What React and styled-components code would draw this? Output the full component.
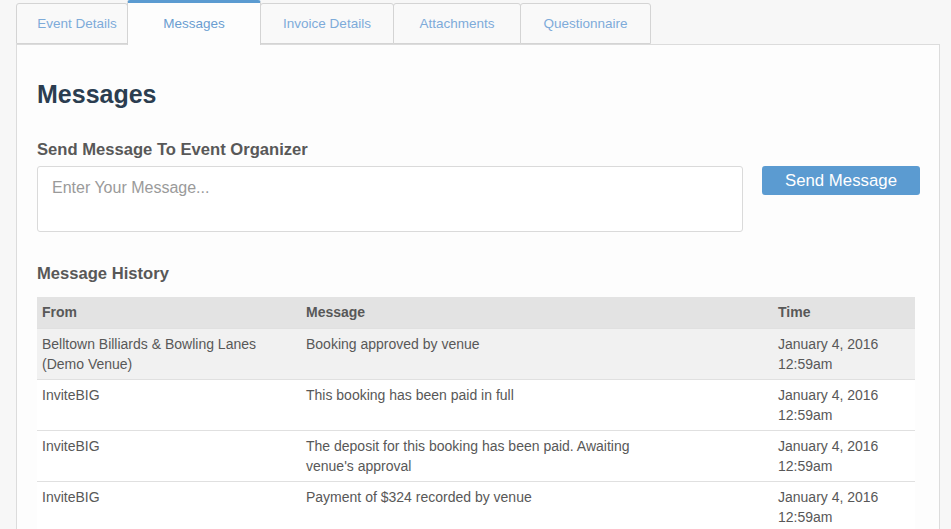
import React from "react";
import styled, { createGlobalStyle } from "styled-components";

const GlobalStyle = createGlobalStyle`
  body {
    margin: 0;
    background: #f7f7f7;
    font-family: "Liberation Sans", Arial, sans-serif;
  }
`;

const Page = styled.div`
  padding: 0 11px 0 16px;
`;

const TabBar = styled.div`
  display: flex;
  align-items: flex-end;
  height: 44px;
`;

const Tab = styled.div`
  box-sizing: border-box;
  width: ${(p) => p.width}px;
  height: ${(p) => (p.active ? 45 : 41)}px;
  margin-bottom: ${(p) => (p.active ? -1 : 0)}px;
  display: flex;
  align-items: center;
  justify-content: center;
  padding-left: ${(p) => p.shift || 0}px;
  padding-bottom: ${(p) => (p.active ? 2 : 0)}px;
  font-size: 13.5px;
  color: ${(p) => (p.active ? "#6b9dd1" : "#7eabd9")};
  background: ${(p) => (p.active ? "#fdfdfd" : "#f9f9f9")};
  border: 1px solid #d4d4d4;
  border-top: ${(p) => (p.active ? "3px solid #5b9bd1" : "1px solid #d4d4d4")};
  border-bottom: ${(p) => (p.active ? "none" : "1px solid #d4d4d4")};
  border-radius: 3px 3px 0 0;
  margin-right: -1px;
  position: relative;
  z-index: ${(p) => (p.active ? 2 : 1)};
`;

const Panel = styled.div`
  background: #fdfdfd;
  border: 1px solid #dcdcdc;
  padding: 34px 19px 0 20px;
  min-height: 500px;
`;

const Heading = styled.h1`
  margin: 0;
  font-size: 25px;
  line-height: 30px;
  font-weight: bold;
  color: #2b3d50;
`;

const SubHeading = styled.h2`
  margin: ${(p) => p.top}px 0 0;
  font-size: 16.6px;
  line-height: 20px;
  font-weight: bold;
  color: #585858;
`;

const ComposeRow = styled.div`
  display: flex;
  align-items: flex-start;
  gap: 19px;
  margin-top: 6px;
`;

const MessageInput = styled.textarea`
  box-sizing: border-box;
  width: 706px;
  height: 66px;
  border: 1px solid #dadada;
  border-radius: 3px;
  background: #fff;
  padding: 12px 14px;
  font-family: "Liberation Sans", Arial, sans-serif;
  font-size: 16px;
  resize: none;
  outline: none;
  &::placeholder {
    color: #9a9a9a;
  }
`;

const SendButton = styled.button`
  width: 158px;
  height: 29px;
  border: none;
  border-radius: 3px;
  background: #5b9bd1;
  color: #fff;
  font-family: "Liberation Sans", Arial, sans-serif;
  font-size: 16.8px;
  padding: 1px 0 0;
`;

const Table = styled.table`
  margin-top: 13px;
  width: 878px;
  border-collapse: collapse;
  font-size: 14px;
  color: #585858;
`;

const HeadCell = styled.th`
  background: #e3e3e3;
  text-align: left;
  font-weight: bold;
  height: 31px;
  padding: 0 5px;
  width: ${(p) => p.w}px;
  box-sizing: border-box;
`;

const Row = styled.tr`
  background: ${(p) => (p.shade ? "#f1f1f1" : "#fff")};
  border-top: 1px solid #e0e0e0;
`;

const Cell = styled.td`
  vertical-align: top;
  line-height: 20px;
  padding: 5px 5px 5px;
  height: 40px;
`;

const MessageText = styled.span`
  display: block;
  max-width: 345px;
`;

const tabs = [
  { label: "Event Details", width: 112, shift: 10 },
  { label: "Messages", width: 134, active: true },
  { label: "Invoice Details", width: 134 },
  { label: "Attachments", width: 128 },
  { label: "Questionnaire", width: 131 },
];

const history = [
  {
    from: "Belltown Billiards & Bowling Lanes (Demo Venue)",
    message: "Booking approved by venue",
    shade: true,
  },
  { from: "InviteBIG", message: "This booking has been paid in full" },
  {
    from: "InviteBIG",
    message: "The deposit for this booking has been paid. Awaiting venue's approval",
  },
  { from: "InviteBIG", message: "Payment of $324 recorded by venue" },
];

export default function App() {
  return (
    <Page>
      <GlobalStyle />
      <TabBar>
        {tabs.map((t) => (
          <Tab key={t.label} width={t.width} active={t.active} shift={t.shift}>
            {t.label}
          </Tab>
        ))}
      </TabBar>
      <Panel>
        <Heading>Messages</Heading>
        <SubHeading top={31}>Send Message To Event Organizer</SubHeading>
        <ComposeRow>
          <MessageInput placeholder="Enter Your Message..." />
          <SendButton>Send Message</SendButton>
        </ComposeRow>
        <SubHeading top={32}>Message History</SubHeading>
        <Table>
          <thead>
            <tr>
              <HeadCell w={264}>From</HeadCell>
              <HeadCell w={472}>Message</HeadCell>
              <HeadCell w={142}>Time</HeadCell>
            </tr>
          </thead>
          <tbody>
            {history.map((h, i) => (
              <Row key={i} shade={h.shade}>
                <Cell>{h.from}</Cell>
                <Cell>
                  <MessageText>{h.message}</MessageText>
                </Cell>
                <Cell>
                  January 4, 2016
                  <br />
                  12:59am
                </Cell>
              </Row>
            ))}
          </tbody>
        </Table>
      </Panel>
    </Page>
  );
}
